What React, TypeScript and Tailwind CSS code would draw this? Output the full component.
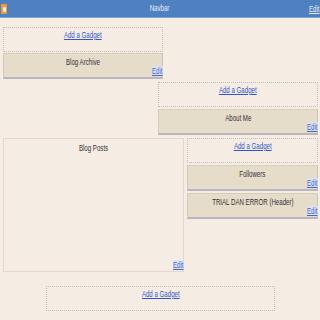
import React from 'react';

const font = { fontFamily: '"Liberation Sans", Arial, sans-serif' };

// labels in the layout editor are narrow, so squeeze them a bit
const narrow = 'inline-block whitespace-nowrap text-[9px] leading-[10px] scale-x-[0.68]';

const AddGadget: React.FC<{ className?: string }> = ({ className = '' }) => (
  <div className={`border border-dotted border-[#c4bcb2] h-[25px] flex justify-center items-start pt-[2px] leading-[10px] ${className}`}>
    <a className={`${narrow} underline text-[#3355cc]`}>Add a Gadget</a>
  </div>
);

const EditLink: React.FC = () => (
  <a className={`${narrow} absolute -right-[1px] bottom-[1px] origin-right text-[#4466cc] underline bg-[#dde2f2] leading-[9px]`}>
    Edit
  </a>
);

const Widget: React.FC<{ title: string; className?: string }> = ({ title, className = '' }) => (
  <div
    className={`relative bg-[#e6dcca] border border-[#d6ccbc] border-b-2 border-b-[#b9b6c0] border-r-[#c8c2c0] h-[26px] flex justify-center items-start pt-[3px] leading-[10px] ${className}`}
  >
    <span className={`${narrow} text-[#333]`}>{title}</span>
    <EditLink />
  </div>
);

export default function App() {
  return (
    <div className="w-[320px] h-[320px] bg-[#f5ede3] overflow-hidden leading-[10px]" style={font}>
      {/* navbar */}
      <div className="relative h-[18px] bg-[#4f80c0] border-b border-b-[#7ea3d6] flex justify-center items-start">
        <div className="absolute left-[1px] top-[4px] w-[6px] h-[10px] rounded-[1px] bg-[#f29b36] flex items-center justify-center">
          <div className="w-[3px] h-[5px] bg-[#fff1dc] rounded-[1px]" />
        </div>
        <span className={`${narrow} text-[#e8eef8] mt-[3px]`}>Navbar</span>
        <a className={`${narrow} absolute right-0 top-[4px] origin-right text-[#e8eef8] underline`}>Edit</a>
      </div>

      <div className="pt-[9px]">
        <AddGadget className="ml-[3px] w-[160px]" />
        <Widget title="Blog Archive" className="ml-[3px] w-[160px] mt-[1px]" />

        <AddGadget className="ml-[158px] w-[160px] mt-[3px]" />
        <Widget title="About Me" className="ml-[158px] w-[160px] mt-[2px]" />

        <div className="flex mt-[3px] ml-[3px] gap-[3px]">
          <div className="relative w-[181px] h-[134px] border border-[#e2d8d0] flex justify-center items-start pt-[4px]">
            <span className={`${narrow} text-[#333]`}>Blog Posts</span>
            <EditLink />
          </div>
          <div className="w-[131px] flex flex-col">
            <AddGadget className="w-full" />
            <Widget title="Followers" className="w-full mt-[2px]" />
            <Widget title="TRIAL DAN ERROR (Header)" className="w-full mt-[2px]" />
          </div>
        </div>

        <AddGadget className="ml-[46px] w-[229px] mt-[14px]" />
      </div>
    </div>
  );
}
